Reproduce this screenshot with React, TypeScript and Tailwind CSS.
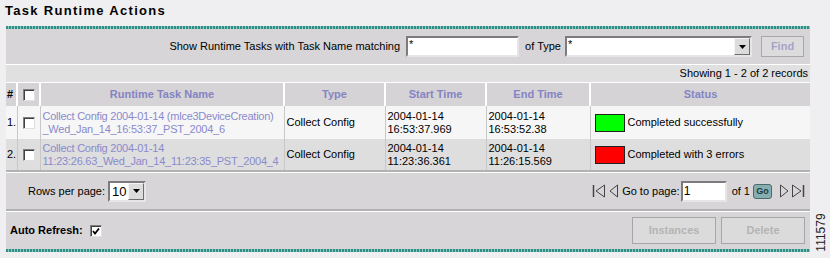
import React from "react";

const Teal = () => (
  <div className="h-[3px] bg-[repeating-linear-gradient(90deg,#2f8f86_0px,#2f8f86_2px,#8cc8c0_2px,#8cc8c0_3px)]" />
);

const Sunken = ({ className = "", children }: { className?: string; children?: React.ReactNode }) => (
  <div
    className={
      "bg-white border-2 border-t-[#7c7c7c] border-l-[#7c7c7c] border-b-[#e6e6e6] border-r-[#e6e6e6] flex items-center " +
      className
    }
  >
    {children}
  </div>
);

const DropArrow = () => (
  <div className="w-[16px] h-full bg-[#dcdcdc] border border-t-[#f4f4f4] border-l-[#f4f4f4] border-b-[#6e6e6e] border-r-[#6e6e6e] flex items-center justify-center">
    <svg width="7" height="4" viewBox="0 0 7 4">
      <polygon points="0,0 7,0 3.5,4" fill="#000" />
    </svg>
  </div>
);

const Check = ({ checked = false }: { checked?: boolean }) => (
  <div className="w-[12px] h-[12px] bg-white border border-t-[#808080] border-l-[#808080] border-b-[#e0e0e0] border-r-[#e0e0e0] shadow-[inset_1px_1px_0_#404040] flex items-center justify-center">
    {checked && (
      <svg width="8" height="8" viewBox="0 0 8 8">
        <polyline points="1,4 3,6.5 7,1.5" fill="none" stroke="#000" strokeWidth="1.8" />
      </svg>
    )}
  </div>
);

const PagerIcon = ({ dir, bar }: { dir: "l" | "r"; bar?: boolean }) => (
  <svg width={bar ? 14 : 10} height="14" viewBox={bar ? "0 0 14 14" : "0 0 10 14"}>
    {dir === "l" ? (
      bar ? (
        <>
          <line x1="1.5" y1="1" x2="1.5" y2="13" stroke="#444" strokeWidth="1.5" />
          <polygon points="12.5,1 4,7 12.5,13" fill="none" stroke="#444" strokeWidth="1" />
        </>
      ) : (
        <polygon points="8.5,1 1,7 8.5,13" fill="none" stroke="#444" strokeWidth="1" />
      )
    ) : bar ? (
      <>
        <polygon points="1.5,1 10,7 1.5,13" fill="none" stroke="#444" strokeWidth="1" />
        <line x1="12.5" y1="1" x2="12.5" y2="13" stroke="#444" strokeWidth="1.5" />
      </>
    ) : (
      <polygon points="1.5,1 9,7 1.5,13" fill="none" stroke="#444" strokeWidth="1" />
    )}
  </svg>
);

const rows = [
  {
    n: "1.",
    name1: "Collect Config 2004-01-14 (mlce3DeviceCreation)",
    name2: "_Wed_Jan_14_16:53:37_PST_2004_6",
    type: "Collect Config",
    s1: "2004-01-14",
    s2: "16:53:37.969",
    e1: "2004-01-14",
    e2: "16:53:52.38",
    color: "bg-[#00ff00]",
    status: "Completed successfully",
    bg: "bg-[#f6f6f6]",
    h: "h-[33px]",
  },
  {
    n: "2.",
    name1: "Collect Config 2004-01-14",
    name2: "11:23:26.63_Wed_Jan_14_11:23:35_PST_2004_4",
    type: "Collect Config",
    s1: "2004-01-14",
    s2: "11:23:36.361",
    e1: "2004-01-14",
    e2: "11:26:15.569",
    color: "bg-[#ff0000]",
    status: "Completed with 3 errors",
    bg: "bg-[#dedede]",
    h: "h-[31px]",
  },
];

export default function App() {
  return (
    <div className="w-[830px] h-[258px] bg-[#efeef0] relative overflow-hidden font-['Liberation_Sans',Arial,sans-serif] text-[11px] text-black leading-[13px]">
      <div className="h-[26px] pl-[5px] pt-[3px] text-[13px] leading-[16px] font-bold tracking-[1.3px]">
        Task Runtime Actions
      </div>
      <div className="ml-[6px] w-[804px]">
        <Teal />
        <div className="h-[35px] bg-[#d7d5d7] flex items-center justify-end pr-[6px]">
          <span className="mr-[6px]">Show Runtime Tasks with Task Name matching</span>
          <Sunken className="w-[113px] h-[21px] pl-[1px] items-start">
            <span className="leading-[12px]">*</span>
          </Sunken>
          <span className="ml-[6px] mr-[4px]">of Type</span>
          <Sunken className="w-[187px] h-[21px] pl-[1px] items-start justify-between">
            <span className="leading-[12px]">*</span>
            <DropArrow />
          </Sunken>
          <button className="ml-[9px] w-[43px] h-[21px] bg-[#dddcdd] border border-[#a8a8a8] text-[#a4a4c8] font-bold text-[11px]">
            Find
          </button>
        </div>
        <div className="h-[1px] bg-white" />
        <div className="h-[17px] bg-[#e1e0e1] flex items-center justify-end pr-[2px]">
          Showing 1 - 2 of 2 records
        </div>
        <div className="h-[1px] bg-white" />
        <table className="table-fixed border-collapse w-[804px]">
          <colgroup>
            <col className="w-[11px]" />
            <col className="w-[23px]" />
            <col className="w-[244px]" />
            <col className="w-[101px]" />
            <col className="w-[101px]" />
            <col className="w-[104px]" />
            <col className="w-[220px]" />
          </colgroup>
          <thead>
            <tr className="h-[23px] bg-[#d5d3d5] text-[#8484c4] font-bold">
              <th className="border-r-2 border-white text-black text-left pl-[1px] font-bold">#</th>
              <th className="border-r-2 border-white">
                <div className="flex justify-center">
                  <Check />
                </div>
              </th>
              <th className="border-r-2 border-white">Runtime Task Name</th>
              <th className="border-r-2 border-white">Type</th>
              <th className="border-r-2 border-white">Start Time</th>
              <th className="border-r-2 border-white">End Time</th>
              <th>Status</th>
            </tr>
          </thead>
          <tbody>
            {rows.map((r) => (
              <tr key={r.n} className={r.h + " " + r.bg}>
                <td className="border-r border-[#c8c8c8] pl-[1px]">{r.n}</td>
                <td className="border-r border-[#c8c8c8]">
                  <div className="flex justify-center">
                    <Check />
                  </div>
                </td>
                <td className="border-r border-[#c8c8c8] pl-[2px] text-[#8a8acc] whitespace-nowrap overflow-hidden tracking-[-0.25px]">
                  <div>{r.name1}</div>
                  <div>{r.name2}</div>
                </td>
                <td className="border-r border-[#c8c8c8] pl-[2px]">{r.type}</td>
                <td className="border-r border-[#c8c8c8] pl-[2px]">
                  <div>{r.s1}</div>
                  <div>{r.s2}</div>
                </td>
                <td className="border-r border-[#c8c8c8] pl-[2px]">
                  <div>{r.e1}</div>
                  <div>{r.e2}</div>
                </td>
                <td className="pl-[4px]">
                  <div className="flex items-center">
                    <div className={"w-[30px] h-[18px] border border-[#222] " + r.color} />
                    <span className="ml-[3px]">{r.status}</span>
                  </div>
                </td>
              </tr>
            ))}
          </tbody>
        </table>
        <div className="h-[2px] bg-[#b2b2b2]" />
        <div className="h-[1px] bg-white" />
        <div className="h-[36px] bg-[#d7d5d7] flex items-center justify-between pl-[22px] pr-[5px]">
          <div className="flex items-center">
            <span className="mr-[3px]">Rows per page:</span>
            <Sunken className="w-[38px] h-[21px] pl-[2px] justify-between">
              <span className="text-[13px]">10</span>
              <DropArrow />
            </Sunken>
          </div>
          <div className="flex items-center">
            <PagerIcon dir="l" bar />
            <span className="ml-[3px]" />
            <PagerIcon dir="l" />
            <span className="ml-[3px]">Go to page:</span>
            <Sunken className="ml-[1px] w-[46px] h-[21px] pl-[1px]">
              <span className="text-[12px]">1</span>
            </Sunken>
            <span className="ml-[5px]">of 1</span>
            <div className="ml-[3px] w-[19px] h-[15px] rounded-[3px] bg-[#86aeb0] border border-[#4a6a6c] text-[9px] leading-[12px] font-bold text-[#1c3c40] flex items-center justify-center">
              Go
            </div>
            <span className="ml-[7px]" />
            <PagerIcon dir="r" />
            <span className="ml-[2px]" />
            <PagerIcon dir="r" bar />
          </div>
        </div>
        <div className="h-[2px] bg-[#b2b2b2]" />
        <div className="h-[1px] bg-white" />
        <div className="h-[37px] bg-[#d7d5d7] flex items-center justify-between pl-[4px] pr-[5px]">
          <div className="flex items-center">
            <span className="font-bold">Auto Refresh:</span>
            <span className="ml-[7px]">
              <Check checked />
            </span>
          </div>
          <div className="flex items-center gap-[5px]">
            <button className="w-[84px] h-[27px] bg-[#dcdbdc] border border-[#a6a6a6] text-[#b4b4b4] font-bold text-[11px]">
              Instances
            </button>
            <button className="w-[84px] h-[27px] bg-[#dcdbdc] border border-[#a6a6a6] text-[#b4b4b4] font-bold text-[11px]">
              Delete
            </button>
          </div>
        </div>
        <Teal />
      </div>
      <div className="absolute left-[812px] top-[206px] w-[18px] h-[52px] flex items-center justify-center">
        <span className="-rotate-90 text-[12px] text-[#222] whitespace-nowrap">111579</span>
      </div>
    </div>
  );
}
